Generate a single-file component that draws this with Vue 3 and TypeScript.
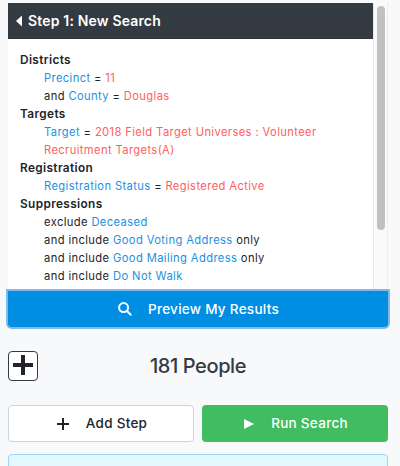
<script setup lang="ts">
type Tone = 'plain' | 'field' | 'value'
interface Part { text: string; tone: Tone }
interface Group { title: string; rows: Part[][] }

const p = (text: string): Part => ({ text, tone: 'plain' })
const f = (text: string): Part => ({ text, tone: 'field' })
const v = (text: string): Part => ({ text, tone: 'value' })

const groups: Group[] = [
  {
    title: 'Districts',
    rows: [
      [f('Precinct'), p(' = '), v('11')],
      [p('and '), f('County'), p(' = '), v('Douglas')],
    ],
  },
  {
    title: 'Targets',
    rows: [[f('Target'), p(' = '), v('2018 Field Target Universes : Volunteer Recruitment Targets(A)')]],
  },
  {
    title: 'Registration',
    rows: [[f('Registration Status'), p(' = '), v('Registered Active')]],
  },
  {
    title: 'Suppressions',
    rows: [
      [p('exclude '), f('Deceased')],
      [p('and include '), f('Good Voting Address'), p(' only')],
      [p('and include '), f('Good Mailing Address'), p(' only')],
      [p('and include '), f('Do Not Walk')],
    ],
  },
]
const people = 181
</script>

<template>
  <main class="page">
    <section class="panel">
      <div class="content">
        <header class="step">
          <svg class="caret" viewBox="0 0 6 12"><path d="M6 0.5V11.5L0 6Z" /></svg>
          <span>Step 1: New Search</span>
        </header>
        <div class="criteria">
          <div v-for="g in groups" :key="g.title">
            <div class="title">{{ g.title }}</div>
            <div v-for="(row, i) in g.rows" :key="i" class="row">
              <span v-for="(part, j) in row" :key="j" :class="part.tone">{{ part.text }}</span>
            </div>
          </div>
        </div>
      </div>
      <div class="track"><div class="thumb"></div></div>
    </section>
    <button class="btn preview">
      <svg class="search" viewBox="0 0 14 14"><circle cx="5.6" cy="5.6" r="4.5" /><path d="M9 9L12.7 12.7" /></svg>
      <span>Preview My Results</span>
    </button>
    <div class="summary">
      <button class="expand">
        <svg viewBox="0 0 20 20"><path d="M8 0H12V8H20V12H12V20H8V12H0V8H8Z" /></svg>
      </button>
      <h2 class="count">{{ people }} People</h2>
    </div>
    <div class="actions">
      <button class="btn add">
        <svg class="plus" viewBox="0 0 12 12"><path d="M5 0H7V5H12V7H7V12H5V7H0V5H5Z" /></svg>
        <span>Add Step</span>
      </button>
      <button class="btn run">
        <svg class="play" viewBox="0 0 10 10"><path d="M0 0L10 5L0 10Z" /></svg>
        <span>Run Search</span>
      </button>
    </div>
    <div class="notice"></div>
  </main>
</template>

<style>
body { background: #f8f9fb; overflow: hidden; }
</style>

<style scoped>
* { box-sizing: border-box; }
.page {
  height: 466px;
  overflow: hidden;
  padding: 3px 12px 0 8px;
  display: flex;
  flex-direction: column;
  font-family: Inter, sans-serif;
  color: #212529;
}
.panel { flex: none; height: 288px; display: flex; background: #fff; overflow: hidden; }
.content { width: 365px; }
.step {
  height: 36px;
  background: #343a42;
  border-bottom: 1px solid #2f343a;
  color: #fff;
  display: flex;
  align-items: center;
  gap: 6px;
  padding-left: 8px;
  font-size: 14px;
  font-weight: 600;
  letter-spacing: 0.17px;
}
.caret { width: 6px; height: 12px; fill: #fff; }
.criteria { padding: 12px 12px 0; font-size: 11.2px; line-height: 18px; letter-spacing: 0.38px; }
.title { font-size: 11.8px; font-weight: 600; letter-spacing: 0.38px; }
.row { padding-left: 24px; white-space: pre-wrap; }
.field { color: #1b91e2; }
.value { color: #fd5f63; }
.track {
  width: 15px;
  padding: 3px 2px 0 3px;
  background: #fafafa;
  border-left: 1px solid #e8e8e8;
  border-right: 1px solid #ededed;
}
.thumb { width: 8px; height: 224px; border-radius: 4px; background: #c1c1c1; }
.btn {
  border: 0;
  margin: 0;
  padding: 0 0 2px 2px;
  display: flex;
  align-items: center;
  justify-content: center;
  font: 500 13.5px Inter, sans-serif;
  letter-spacing: 0.28px;
  border-radius: 4px;
}
.preview {
  flex: none;
  position: relative;
  height: 36px;
  padding: 0 0 0 1px;
  color: #fff;
  background: #008ee3;
  border-radius: 0 0 4px 4px;
  box-shadow: 0 0 0 2px #80bae8;
  gap: 16px;
}
.search { width: 14px; height: 14px; fill: none; stroke: #fff; stroke-width: 2; stroke-linecap: round; }
.summary { flex: none; margin-top: 24px; height: 30px; display: flex; align-items: center; }
.expand {
  width: 30px;
  height: 30px;
  padding: 0;
  display: grid;
  place-items: center;
  background: #fff;
  border: 1px solid #343a42;
  border-radius: 4px;
}
.expand svg { width: 20px; height: 20px; fill: #212529; margin-top: -2px; }
.count {
  margin: 0 30px 0 0;
  flex: 1;
  text-align: center;
  font-size: 20px;
  line-height: 30px;
  font-weight: 500;
  letter-spacing: -0.4px;
  color: #343a42;
}
.actions { flex: none; margin-top: 24px; height: 37px; display: flex; gap: 8px; }
.actions .btn { flex: none; width: 186px; }
.add { background: #fff; border: 1px solid #ced4da; color: #212529; gap: 17px; }
.plus { width: 12px; height: 12px; fill: #212529; margin-top: 3px; }
.run { background: #40bd60; color: #fff; gap: 17px; }
.play { width: 10px; height: 10px; fill: #fff; margin-top: 2px; }
.notice { flex: none; margin-top: 12px; height: 40px; border: 1px solid #99d6fb; border-radius: 4px; background: #e5f7ff; }
</style>
